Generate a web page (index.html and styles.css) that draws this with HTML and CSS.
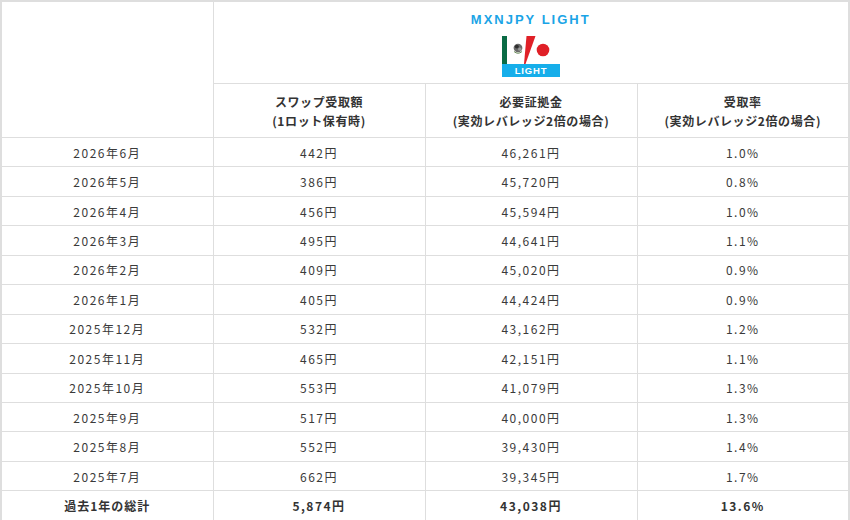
FILE: index.html
```html
<!DOCTYPE html>
<html lang="ja">
<head>
<meta charset="utf-8">
<link rel="stylesheet" href="styles.css">
</head>
<body>
<table class="swap">
  <colgroup><col><col><col><col></colgroup>
  <thead>
    <tr class="head1">
      <th rowspan="2" class="blank"></th>
      <th colspan="3" class="brand">
        <div class="brand-title">MXNJPY LIGHT</div>
        <svg class="logo" viewBox="0 0 58 41" width="58" height="41" aria-hidden="true">
          <rect x="0" y="0" width="58" height="41" fill="#fff"/>
          <rect x="0" y="0" width="5" height="28" fill="#0a6b45"/>
          <g>
            <ellipse cx="16" cy="12" rx="4.4" ry="4.2" fill="#6a6a6a"/>
            <ellipse cx="14.8" cy="10.6" rx="2" ry="1.9" fill="#2e2e2e"/>
            <ellipse cx="17.8" cy="13.2" rx="1.7" ry="1.6" fill="#9a9a9a"/>
            <path d="M12 15.5 Q16 19 20 15.5" stroke="#6a8a5a" stroke-width="1" fill="none"/>
          </g>
          <polygon points="24.5,0 33.5,0 23.5,28 22,28" fill="#e02027"/>
          <circle cx="41" cy="14" r="6.3" fill="#e02027"/>
          <rect x="0" y="28" width="58" height="13" fill="#16aeea"/>
          <text x="29" y="38.4" text-anchor="middle" class="logo-text">LIGHT</text>
        </svg>
      </th>
    </tr>
    <tr class="head2">
      <th>スワップ受取額<br>(1ロット保有時)</th>
      <th>必要証拠金<br>(実効レバレッジ2倍の場合)</th>
      <th>受取率<br>(実効レバレッジ2倍の場合)</th>
    </tr>
  </thead>
  <tbody>
    <tr><td>2026年6月</td><td>442円</td><td>46,261円</td><td>1.0%</td></tr>
    <tr><td>2026年5月</td><td>386円</td><td>45,720円</td><td>0.8%</td></tr>
    <tr><td>2026年4月</td><td>456円</td><td>45,594円</td><td>1.0%</td></tr>
    <tr><td>2026年3月</td><td>495円</td><td>44,641円</td><td>1.1%</td></tr>
    <tr><td>2026年2月</td><td>409円</td><td>45,020円</td><td>0.9%</td></tr>
    <tr><td>2026年1月</td><td>405円</td><td>44,424円</td><td>0.9%</td></tr>
    <tr><td>2025年12月</td><td>532円</td><td>43,162円</td><td>1.2%</td></tr>
    <tr><td>2025年11月</td><td>465円</td><td>42,151円</td><td>1.1%</td></tr>
    <tr><td>2025年10月</td><td>553円</td><td>41,079円</td><td>1.3%</td></tr>
    <tr><td>2025年9月</td><td>517円</td><td>40,000円</td><td>1.3%</td></tr>
    <tr><td>2025年8月</td><td>552円</td><td>39,430円</td><td>1.4%</td></tr>
    <tr><td>2025年7月</td><td>662円</td><td>39,345円</td><td>1.7%</td></tr>
    <tr class="total"><td>過去1年の総計</td><td>5,874円</td><td>43,038円</td><td>13.6%</td></tr>
  </tbody>
</table>
</body>
</html>
```
FILE: styles.css
```css
html, body {
  margin: 0;
  padding: 0;
  background: #fff;
}
body {
  font-family: "Noto Sans CJK JP", "Noto Sans", sans-serif;
  color: #333;
}
.swap {
  width: 850px;
  table-layout: fixed;
  border-collapse: collapse;
  border: 2px solid #dedede;
}
.swap th,
.swap td {
  border: 1px solid #dedede;
  text-align: center;
  vertical-align: middle;
  padding: 0;
}
.head1 th {
  height: 81px;
}
.brand {
  vertical-align: top !important;
}
.brand-title {
  color: #1aa4e6;
  font-family: "Liberation Sans", Arial, sans-serif;
  font-weight: 700;
  font-size: 13px;
  letter-spacing: 2px;
  line-height: 16px;
  margin-top: 10px;
}
.logo {
  display: block;
  margin: 8px auto 0;
}
.logo-text {
  font-family: "Liberation Sans", Arial, sans-serif;
  font-weight: 700;
  font-size: 9.5px;
  letter-spacing: 0.8px;
  fill: #fff;
}
.head2 th {
  height: 53px;
  font-size: 12px;
  font-weight: 700;
  line-height: 19px;
  letter-spacing: 0.6px;
  color: #333;
}
.swap tbody td {
  height: 28.45px;
  font-size: 12px;
  letter-spacing: 1.5px;
  color: #3a3a3a;
}
.swap tbody tr.total td {
  font-weight: 700;
  letter-spacing: 1.5px;
  color: #333;
}
.swap tbody tr.total td:first-child {
  letter-spacing: 1px;
}
```
